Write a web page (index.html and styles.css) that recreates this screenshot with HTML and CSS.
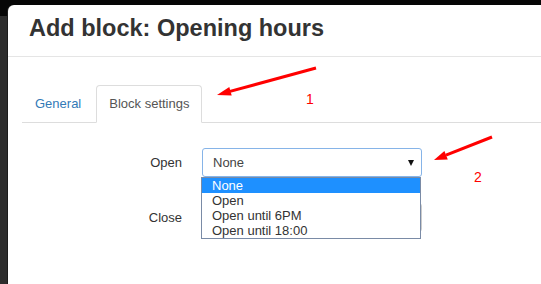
FILE: index.html
```html
<!DOCTYPE html>
<html lang="en">
<head>
    <meta charset="UTF-8">
    <title>Add block: Opening hours</title>
    <link rel="stylesheet" href="styles.css">
</head>
<body>
    <div class="modal">
        <div class="modal-header">
            <h1 class="modal-title">Add block: Opening hours</h1>
        </div>
        <div class="modal-body">
            <ul class="nav-tabs">
                <li><a href="#">General</a></li>
                <li class="active"><a href="#">Block settings</a></li>
            </ul>

            <div class="form-grid">
                <label class="form-label">Open</label>
                <div class="field">
                    <div class="select is-focused">
                        <span>None</span>
                        <span class="caret"></span>
                    </div>
                    <ul class="options">
                        <li class="selected">None</li>
                        <li>Open</li>
                        <li>Open until 6PM</li>
                        <li>Open until 18:00</li>
                    </ul>
                </div>

                <label class="form-label">Close</label>
                <div class="field">
                    <!-- hidden behind the open dropdown -->
                    <div class="select">
                        <span></span>
                        <span class="caret"></span>
                    </div>
                </div>
            </div>
        </div>
    </div>

    <!-- annotation arrows drawn over the screenshot -->
    <svg class="annotations" width="541" height="284" viewBox="0 0 541 284">
        <line x1="316" y1="68" x2="230" y2="91.4" />
        <polygon points="217,95 231.7,95.6 229.3,87" />
        <text x="306" y="104">1</text>

        <line x1="492" y1="137" x2="446" y2="155.2" />
        <polygon points="434,160 447.8,159.4 444.4,151" />
        <text x="474" y="182">2</text>
    </svg>
</body>
</html>
```

FILE: styles.css
```css
* {
    margin: 0;
    padding: 0;
    box-sizing: border-box;
}

body {
    position: relative;
    width: 541px;
    height: 284px;
    overflow: hidden;
    font-family: 'Liberation Sans', Arial, sans-serif;
    color: #333;
    background: linear-gradient(to bottom, #060606 16px, #2d2d2d 16px);
}

.modal {
    margin: 5px 0 0 8px;
    min-height: 279px;
    background: #fff;
    border-radius: 6px 0 0 0;
    box-shadow: -1px 0 0 #1c1c1c;
}

.modal-header {
    padding: 10px 21px 15px;
    border-bottom: 1px solid #e5e5e5;
}

.modal-title {
    font-size: 23.5px;
    font-weight: 700;
    line-height: 26px;
    color: #333;
}

.modal-body {
    padding: 28px 0 0 14px;
}

.nav-tabs {
    display: flex;
    list-style: none;
    border-bottom: 1px solid #ddd;
}

.nav-tabs li {
    margin-bottom: -1px;
}

.nav-tabs a {
    display: block;
    margin-right: 2px;
    padding: 9px 12px 10px;
    font-size: 13px;
    line-height: 17px;
    color: #337ab7;
    text-decoration: none;
    border: 1px solid transparent;
    border-radius: 4px 4px 0 0;
}

.nav-tabs .active a {
    color: #555;
    background: #fff;
    border-color: #ddd #ddd transparent;
}

.form-grid {
    display: grid;
    grid-template-columns: 160px 220px;
    column-gap: 20px;
    row-gap: 26px;
    align-items: center;
    margin-top: 25px;
}

.form-label {
    font-size: 13px;
    text-align: right;
    color: #333;
}

.field {
    position: relative;
}

.select {
    display: flex;
    align-items: center;
    justify-content: space-between;
    height: 29px;
    padding: 0 7px 0 10px;
    font-size: 13px;
    color: #444;
    background: #fff;
    border: 1px solid #ccc;
    border-radius: 3px;
}

.select.is-focused {
    border-color: #86b4e8;
}

.caret {
    width: 0;
    height: 0;
    border-left: 3px solid transparent;
    border-right: 3px solid transparent;
    border-top: 6px solid #111;
}

.options {
    position: absolute;
    top: 100%;
    left: -1px;
    z-index: 2;
    width: 220px;
    list-style: none;
    background: #fff;
    border: 1px solid #7a8ba6;
}

.options li {
    padding: 0 10px;
    font-size: 13px;
    line-height: 15px;
    color: #333;
}

.options li.selected {
    color: #fff;
    background: #1e90ff;
}

.annotations {
    position: absolute;
    top: 0;
    left: 0;
    pointer-events: none;
}

.annotations line {
    stroke: #f00;
    stroke-width: 3;
}

.annotations polygon {
    fill: #f00;
}

.annotations text {
    fill: #f00;
    font-family: 'Liberation Sans', Arial, sans-serif;
    font-size: 14px;
}
```
